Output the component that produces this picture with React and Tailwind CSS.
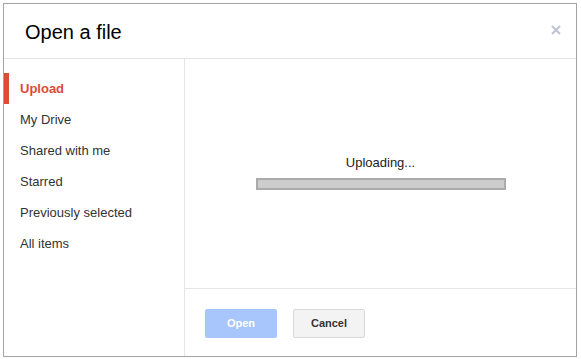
const NAV = ['Upload', 'My Drive', 'Shared with me', 'Starred', 'Previously selected', 'All items'];

export default function App() {
  const active = 0;

  return (
    <div
      className="w-[581px] h-[359px] bg-white pl-[3px] pt-[3px] overflow-hidden"
      style={{ fontFamily: '"Liberation Sans", Arial, sans-serif' }}
    >
      <div className="w-[574px] h-[354px] border border-[#a3a3a3] bg-white flex flex-col">
        {/* header */}
        <div className="h-[55px] shrink-0 border-b border-[#e5e5e5] flex items-center justify-between pl-[21px] pr-[15px]">
          <h1 className="text-[20px] text-black leading-none pt-[1px]">Open a file</h1>
          <svg width="10" height="10" viewBox="0 0 10 10" className="mt-[-2px]">
            <path d="M1 1L9 9M9 1L1 9" stroke="#c0c3d4" strokeWidth="2" />
          </svg>
        </div>

        <div className="flex flex-1 min-h-0">
          {/* sidebar */}
          <nav className="w-[181px] shrink-0 border-r border-[#e5e5e5] pt-[14px]">
            {NAV.map((item, i) => (
              <div key={item} className="relative h-[31px] flex items-center pl-[16px]">
                {i === active && <span className="absolute left-0 top-0 h-[31px] w-[5px] bg-[#dd4b39]" />}
                <span
                  className={`text-[13px] ${
                    i === active ? 'font-bold text-[#dd4b39]' : 'text-[#333]'
                  }`}
                >
                  {item}
                </span>
              </div>
            ))}
          </nav>

          {/* main */}
          <div className="flex-1 flex flex-col">
            <div className="flex-1 flex flex-col items-center justify-center pb-[2px]">
              <p className="text-[13px] text-[#222] leading-[15px]">Uploading...</p>
              <div className="mt-[8px] w-[250px] h-[12px] border-2 border-[#ababab] bg-[#cccccc]" />
            </div>
            <div className="h-[68px] shrink-0 border-t border-[#e5e5e5] flex items-start gap-[16px] pl-[20px] pt-[20px]">
              <button
                type="button"
                className="w-[72px] h-[29px] rounded-[2px] bg-[#a8c6fb] text-white text-[11px] font-bold"
              >
                Open
              </button>
              <button
                type="button"
                className="w-[72px] h-[29px] rounded-[2px] border border-[#d9d9d9] bg-[#f3f3f3] text-[#333] text-[11px] font-bold"
              >
                Cancel
              </button>
            </div>
          </div>
        </div>
      </div>
    </div>
  );
}
